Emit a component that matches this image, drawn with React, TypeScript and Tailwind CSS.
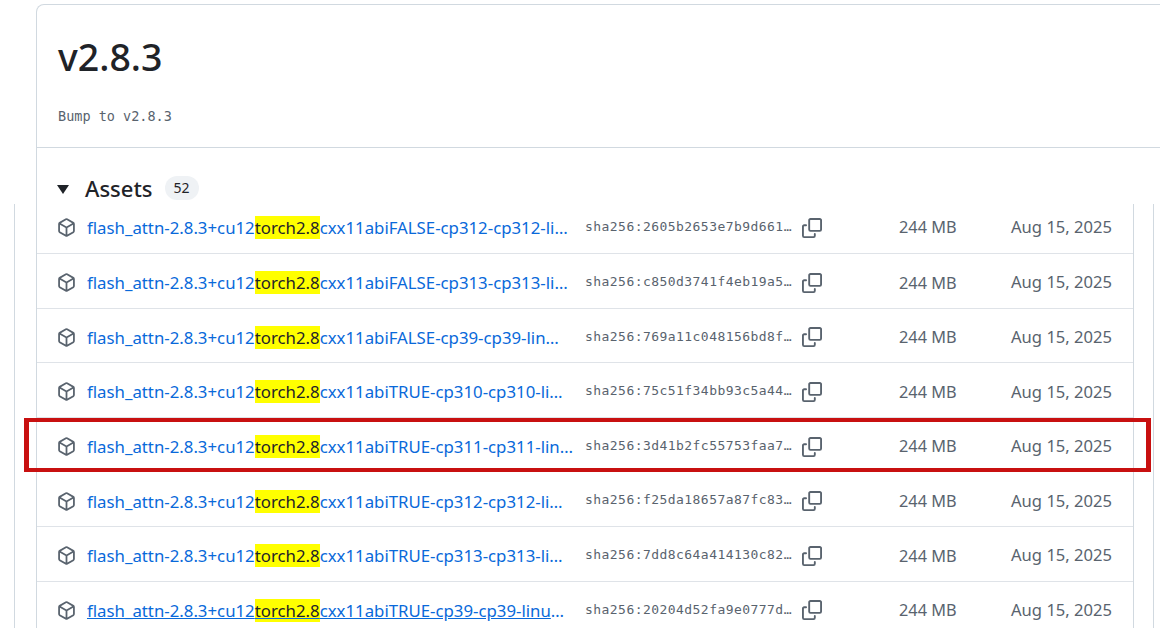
const rows = [
  { name: 'cxx11abiFALSE-cp312-cp312-linux_x86_64.whl', sha: 'sha256:2605b2653e7b9d661a5c7d8e9f0a1b2c' },
  { name: 'cxx11abiFALSE-cp313-cp313-linux_x86_64.whl', sha: 'sha256:c850d3741f4eb19a5c7d8e9f0a1b2c3d' },
  { name: 'cxx11abiFALSE-cp39-cp39-linux_x86_64.whl', sha: 'sha256:769a11c048156bd8f5c7d8e9f0a1b2c3' },
  { name: 'cxx11abiTRUE-cp310-cp310-linux_x86_64.whl', sha: 'sha256:75c51f34bb93c5a445c7d8e9f0a1b2c3' },
  { name: 'cxx11abiTRUE-cp311-cp311-linux_x86_64.whl', sha: 'sha256:3d41b2fc55753faa75c7d8e9f0a1b2c3' },
  { name: 'cxx11abiTRUE-cp312-cp312-linux_x86_64.whl', sha: 'sha256:f25da18657a87fc835c7d8e9f0a1b2c3' },
  { name: 'cxx11abiTRUE-cp313-cp313-linux_x86_64.whl', sha: 'sha256:7dd8c64a414130c825c7d8e9f0a1b2c3' },
  { name: 'cxx11abiTRUE-cp39-cp39-linux_x86_64.whl', sha: 'sha256:20204d52fa9e0777d5c7d8e9f0a1b2c3' },
]

function PackageIcon() {
  return (
    <svg width="19" height="19" viewBox="0 0 16 16" fill="#59636e" className="shrink-0">
      <path d="m8.878.392 5.25 3.045c.54.314.872.89.872 1.514v6.098a1.75 1.75 0 0 1-.872 1.514l-5.25 3.045a1.75 1.75 0 0 1-1.756 0l-5.25-3.045A1.75 1.75 0 0 1 1 11.049V4.951c0-.624.332-1.201.872-1.514L7.122.392a1.75 1.75 0 0 1 1.756 0ZM7.875 1.69l-4.63 2.685L8 7.133l4.755-2.758-4.63-2.685a.248.248 0 0 0-.25 0ZM2.5 5.677v5.372c0 .09.047.171.125.216l4.625 2.683V8.432Zm6.25 8.271 4.625-2.683a.25.25 0 0 0 .125-.216V5.677L8.75 8.432Z" />
    </svg>
  )
}

function CopyIcon() {
  return (
    <svg width="20" height="20" viewBox="0 0 16 16" fill="#59636e" className="shrink-0">
      <path d="M0 6.75C0 5.784.784 5 1.75 5h1.5a.75.75 0 0 1 0 1.5h-1.5a.25.25 0 0 0-.25.25v7.5c0 .138.112.25.25.25h7.5a.25.25 0 0 0 .25-.25v-1.5a.75.75 0 0 1 1.5 0v1.5A1.75 1.75 0 0 1 9.25 16h-7.5A1.75 1.75 0 0 1 0 14.25Z" />
      <path d="M5 1.75C5 .784 5.784 0 6.75 0h7.5C15.216 0 16 .784 16 1.75v7.5A1.75 1.75 0 0 1 14.25 11h-7.5A1.75 1.75 0 0 1 5 9.25Zm1.75-.25a.25.25 0 0 0-.25.25v7.5c0 .138.112.25.25.25h7.5a.25.25 0 0 0 .25-.25v-7.5a.25.25 0 0 0-.25-.25Z" />
    </svg>
  )
}

export default function App() {
  return (
    <main className="w-[1160px] h-[642px] overflow-hidden bg-white font-['Noto_Sans','Open_Sans',sans-serif] text-[#1f2328]">
      <div className="ml-[36px] mt-[4px] w-[1200px] h-[200px] border border-b-0 border-[#d1d9e0] rounded-tl-lg">
        <div className="h-[143px] border-b border-[#d1d9e0] pl-[21px] pt-[26px]">
          <h1 className="text-[37.5px] leading-[52px] font-medium">v2.8.3</h1>
          <p className="mt-[23px] font-['DejaVu_Sans_Mono',monospace] text-[13.5px] leading-[20px] text-[#59636e]">Bump to v2.8.3</p>
        </div>
        <div className="flex items-center pl-[20px] pt-[24px] h-[56px]">
          <span className="w-0 h-0 mt-[2px] border-x-[6px] border-x-transparent border-t-[9px] border-t-[#1f2328]" />
          <h2 className="ml-[16px] text-[22px] leading-[32px] font-medium">Assets</h2>
          <span className="ml-[12px] px-[9px] h-[24px] rounded-full bg-[#eff2f5] text-[14px] leading-[24px]">52</span>
        </div>
      </div>
      <div className="relative ml-[14px] w-[1140px] h-[424px] border-x border-[#d1d9e0]">
        <div className="ml-[21px] w-[1098px] h-full border-x border-[#d1d9e0] overflow-hidden">
          {rows.map((row, i) => (
            <div key={row.sha} className={`flex items-center h-[54.6px] pl-[20px] pt-[4px] ${i === 0 ? '-mt-[5.6px]' : 'border-t border-[#dfe3e8]'}`}>
              <PackageIcon />
              <div className="ml-[11px] w-[481px] shrink-0">
                <a className={`block truncate text-[16.8px] text-[#0969da] ${i === 4 ? 'w-[486px]' : 'w-[481px]'} ${i === 7 ? 'underline' : ''}`}>
                  flash_attn-2.8.3+cu12<mark className="bg-[#ffff00] text-[#1f2328]">torch2.8</mark>{row.name}
                </a>
              </div>
              <span className="ml-[17px] w-[207px] shrink-0 truncate font-['DejaVu_Sans_Mono',monospace] text-[13px] tracking-[0.45px] text-[#59636e] -mt-[2px]">{row.sha}</span>
              <span className="ml-[10px]"><CopyIcon /></span>
              <span className="ml-[77px] w-[60px] text-[16.3px] text-[#59636e] whitespace-nowrap">244 MB</span>
              <span className="ml-[52px] text-[16.6px] text-[#59636e] whitespace-nowrap">Aug 15, 2025</span>
            </div>
          ))}
        </div>
        <div className="absolute left-[9px] top-[214px] w-[1127px] h-[54px] border-x-[5px] border-y-[4px] border-[#c81010]" />
      </div>
    </main>
  )
}
